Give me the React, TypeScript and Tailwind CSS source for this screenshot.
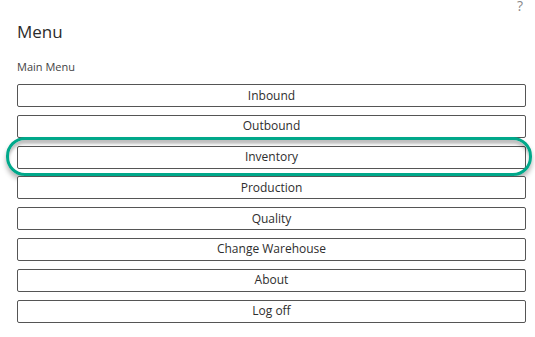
const items = [
  "Inbound",
  "Outbound",
  "Inventory",
  "Production",
  "Quality",
  "Change Warehouse",
  "About",
  "Log off",
];

export default function App() {
  return (
    <div
      className="relative h-[337px] w-[535px] overflow-hidden bg-white text-[#333]"
      style={{ fontFamily: '"Open Sans", "Noto Sans", sans-serif' }}
    >
      <span className="absolute right-[12px] top-[-1px] text-[14px] leading-none text-[#888]">
        ?
      </span>

      <div className="pl-[17px] pt-[20px]">
        <h1 className="text-[17px] leading-[24px] text-[#2b2b2b]">Menu</h1>
        <p className="mt-[15px] text-[11px] leading-[16px] text-[#444]">Main Menu</p>

        <div className="mt-[9px] flex w-[509px] flex-col gap-[7.8px]">
          {items.map((item) => (
            <div key={item} className="relative">
              <button className="flex h-[23px] w-full items-center justify-center rounded-[2px] border border-[#555] bg-white text-[12px] text-[#2e2e2e]">
                {item}
              </button>
              {item === "Inventory" && (
                <div className="pointer-events-none absolute left-[-11px] right-[-6px] top-[-9px] bottom-[-7px] rounded-[19px] border-[3px] border-[#00a88a] shadow-[0_4px_5px_rgba(0,0,0,0.3),inset_0_4px_3px_rgba(0,0,0,0.25)]" />
              )}
            </div>
          ))}
        </div>
      </div>
    </div>
  );
}
